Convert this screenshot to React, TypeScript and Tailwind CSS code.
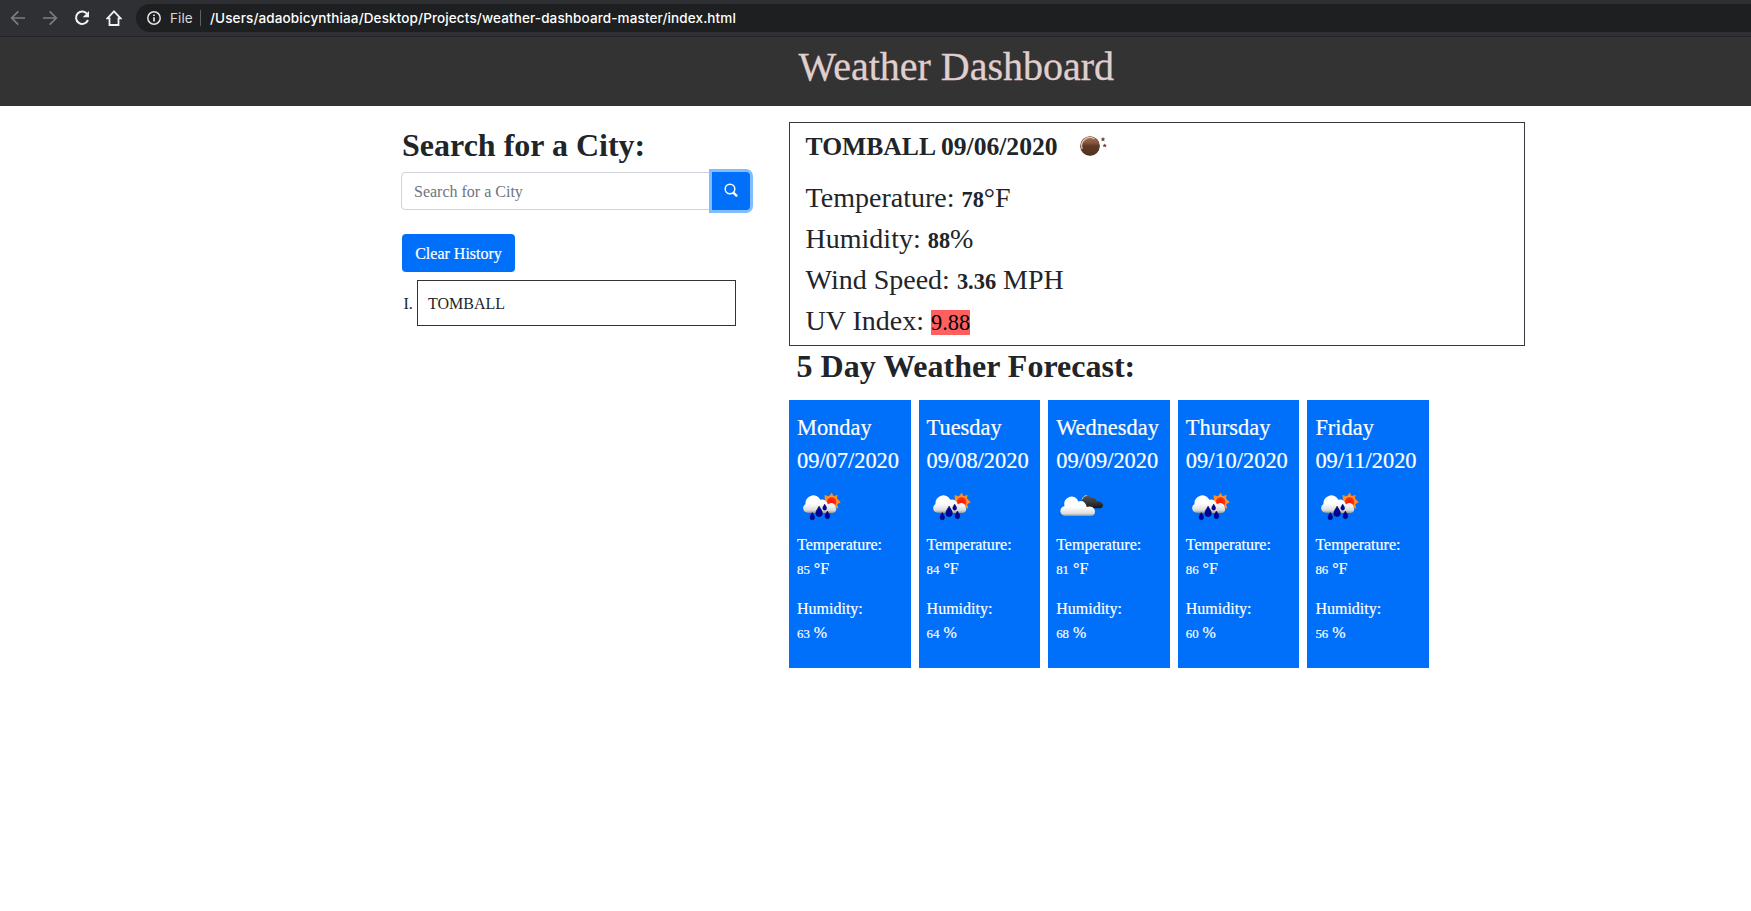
import React from "react";

type Sky = "rain" | "clouds";

interface Day {
  name: string;
  date: string;
  sky: Sky;
  temp: number;
  humidity: number;
}

const days: Day[] = [
  { name: "Monday", date: "09/07/2020", sky: "rain", temp: 85, humidity: 63 },
  { name: "Tuesday", date: "09/08/2020", sky: "rain", temp: 84, humidity: 64 },
  { name: "Wednesday", date: "09/09/2020", sky: "clouds", temp: 81, humidity: 68 },
  { name: "Thursday", date: "09/10/2020", sky: "rain", temp: 86, humidity: 60 },
  { name: "Friday", date: "09/11/2020", sky: "rain", temp: 86, humidity: 56 },
];

function Drop({ x, y, s }: { x: number; y: number; s: number }) {
  return (
    <path
      transform={`translate(${x} ${y}) scale(${s})`}
      d="M0 -5.2C1 -2.8 3.2 -1 3.2 1.8A3.2 3.3 0 0 1 -3.2 1.8C-3.2 -1 -1 -2.8 0 -5.2Z"
      fill="#03039c"
      stroke="#02025e"
      strokeWidth="0.7"
    />
  );
}

function RainIcon() {
  return (
    <svg width="50" height="50" viewBox="0 0 50 50" className="block">
      <defs>
        <linearGradient id="rainCloud" x1="0" y1="12" x2="0" y2="31" gradientUnits="userSpaceOnUse">
          <stop offset="0.5" stopColor="#ffffff" />
          <stop offset="0.85" stopColor="#dcdcdc" />
          <stop offset="1" stopColor="#9a9a9a" />
        </linearGradient>
        <radialGradient id="sun">
          <stop offset="0.3" stopColor="#ff1a0a" />
          <stop offset="0.75" stopColor="#fb3a16" />
          <stop offset="1" stopColor="#ffb259" />
        </radialGradient>
      </defs>
      <path
        d="M34.8 10.6L36.6 14.2L40.6 12.7L40 16.6L43.8 20.2L40.2 22.2L41.4 26.4L37 26L33 27L28 20L27.5 13L31.9 14.2Z"
        fill="#f98d1d"
      />
      <circle cx="34.6" cy="20" r="5.8" fill="url(#sun)" />
      <path
        d="M10.500 30.800A4.800 4.800 0 0 1 8.500 21.900A7.800 7.800 0 0 1 23.300 17.800Q28.500 16.500 31 22.600A4.200 4.200 0 0 1 38.500 25.500A3.500 3.500 0 0 1 35.500 31H28L21 31Z"
        fill="url(#rainCloud)"
      />
      <Drop x={15.3} y={34.2} s={0.72} />
      <Drop x={22.100} y={29.400} s={1} />
      <Drop x={27.700} y={25.100} s={0.6} />
      <Drop x={30.400} y={32.900} s={0.75} />
    </svg>
  );
}

function CloudsIcon() {
  return (
    <svg width="50" height="50" viewBox="-0.600 -0.300 50 50" className="block">
      <defs>
        <linearGradient id="frontCloud" x1="0" y1="15" x2="0" y2="34" gradientUnits="userSpaceOnUse">
          <stop offset="0.5" stopColor="#ffffff" />
          <stop offset="0.85" stopColor="#dedede" />
          <stop offset="1" stopColor="#858585" />
        </linearGradient>
        <linearGradient id="darkCloud" x1="0" y1="13" x2="0" y2="26" gradientUnits="userSpaceOnUse">
          <stop offset="0" stopColor="#5a5a5a" />
          <stop offset="0.5" stopColor="#3a3a3a" />
          <stop offset="1" stopColor="#161616" />
        </linearGradient>
      </defs>
      <path
        d="M27 26L25.500 17.500A5 5 0 0 1 34.600 15.900A4 4 0 0 1 40.200 19.200A3.200 3.200 0 0 1 44.500 20.200A3 3 0 0 1 44 26Z"
        fill="url(#darkCloud)"
      />
      <path d="M25.800 17A4.600 4.600 0 0 1 30.500 13.300" fill="none" stroke="#c4c4c4" strokeWidth="1" />
      <path
        d="M9.500 33.700A5 5 0 0 1 8 23.800A7.200 7.200 0 0 1 21.800 19.200Q28 17.200 30.200 24.600Q36.500 23.200 38.300 28.200Q38.800 33.700 34.500 33.700Z"
        fill="url(#frontCloud)"
      />
    </svg>
  );
}

function MoonIcon() {
  return (
    <svg width="30" height="24" viewBox="0 0 30 24" className="mt-[3px] ml-[21px] block">
      <defs>
        <linearGradient id="moon" x1="0" y1="0" x2="0" y2="1">
          <stop offset="0" stopColor="#a8745a" />
          <stop offset="0.35" stopColor="#82523a" />
          <stop offset="0.5" stopColor="#5f3a27" />
          <stop offset="1" stopColor="#54311f" />
        </linearGradient>
      </defs>
      <circle cx="11" cy="12" r="9.800" fill="#6b422d" />
      <circle cx="11" cy="12" r="9.500" fill="url(#moon)" />
      <path d="M3.200 15A8.400 8.400 0 0 1 15.500 4.800" fill="none" stroke="#e8c4b0" strokeWidth="1.300" />
      <path d="M24 2.800L24.700 4.400L26.400 4.500L25.100 5.600L25.500 7.300L24 6.400L22.500 7.300L22.900 5.600L21.600 4.500L23.300 4.400Z" fill="#6b3d2b" />
      <path d="M25.700 9.400L26.300 10.800L27.900 10.900L26.700 11.900L27.100 13.400L25.700 12.600L24.300 13.400L24.700 11.900L23.500 10.900L25.100 10.800Z" fill="#6b3d2b" />
    </svg>
  );
}

function BrowserBar() {
  return (
    <div className="flex h-[37px] items-start border-b border-[#232425] bg-[#2f3034] pt-1 font-['Inter',sans-serif]">
      <div className="flex h-7 w-[136px] shrink-0 items-center pl-[10px]">
        <svg width="16" height="16" viewBox="0 0 16 16" fill="none" stroke="#7d7e81" strokeWidth="1.700">
          <path d="M15 8H2M8.300 1.300L1.700 8L8.300 14.700" />
        </svg>
        <svg width="16" height="16" viewBox="0 0 16 16" fill="none" stroke="#7d7e81" strokeWidth="1.700" className="ml-4">
          <path d="M1 8H14M7.700 1.300L14.300 8L7.700 14.700" />
        </svg>
        <svg width="16" height="16" viewBox="0 0 16 16" fill="none" className="ml-4">
          <path d="M13.400 4.200A6.200 6.200 0 1 0 14 10" stroke="#f1f1f1" strokeWidth="2" />
          <path d="M15 0.900V7.200H8.700Z" fill="#f1f1f1" />
        </svg>
        <svg width="16" height="16" viewBox="0 0 16 16" fill="none" stroke="#f1f1f1" strokeWidth="1.800" className="ml-4">
          <path d="M8 1.400L1.300 8.400H3.500V15H12.500V8.400H14.700Z" />
        </svg>
      </div>
      <div className="flex h-7 flex-1 items-center rounded-l-full bg-[#1e1f21] pl-[11px]">
        <svg width="14" height="14" viewBox="0 0 14 14" fill="none" stroke="#e4e4e5" strokeWidth="1.500">
          <circle cx="7" cy="7" r="6.200" />
          <path d="M7 6.200V10.400M7 3.500V5" strokeWidth="1.700" />
        </svg>
        <span className="ml-[9px] w-[30px] pt-px text-[13.500px] tracking-[0.120px] text-[#d8d9db]">File</span>
        <span className="h-4 w-px bg-[#5f6063]" />
        <span className="ml-[9px] pt-px text-[13.500px] font-medium tracking-[0.120px] whitespace-nowrap text-white">
          /Users/adaobicynthiaa/Desktop/Projects/weather-dashboard-master/index.html
        </span>
      </div>
    </div>
  );
}

function SearchColumn() {
  return (
    <section className="w-[388px] shrink-0 pt-5">
      <h2 className="pt-px pl-px text-[32px] leading-[37px] font-bold">Search for a City:</h2>
      <div className="mt-2 flex w-[349px]">
        <input
          className="h-[38px] w-[311px] rounded-l border border-[#ced4da] bg-white px-3 pt-0.5 text-base text-[#495057] outline-none placeholder:text-[#6c757d]"
          placeholder="Search for a City"
        />
        <button
          aria-label="Search"
          className="flex h-[38px] w-[38px] items-center justify-center rounded-r bg-[#0070fb] shadow-[0_0_0_3px_#80bdff]"
        >
          <svg width="14" height="14" viewBox="0 0 14 14" fill="none" stroke="#ffffff" className="-mt-0.5">
            <circle cx="6" cy="6" r="4.800" strokeWidth="1.500" />
            <path d="M9.600 9.800L12.400 12.600" strokeWidth="2.400" strokeLinecap="round" />
          </svg>
        </button>
      </div>
      <button className="mt-6 ml-px h-[38px] w-[113px] rounded bg-[#0070fb] pt-0.5 text-base text-white [-webkit-text-stroke:0.2px]">
        Clear History
      </button>
      <div className="mt-2 flex h-[46px] items-center">
        <span className="w-4 pt-0.5 pl-[2.500px] text-base">I.</span>
        <div className="flex h-[46px] w-[319px] items-center border border-[#333333] pt-0.5 pl-[10px] text-base">TOMBALL</div>
      </div>
    </section>
  );
}

function Reading({ label, children }: { label: string; children: React.ReactNode }) {
  return (
    <p className="h-[41px] text-[28px] leading-[41px]">
      {label} {children}
    </p>
  );
}

function CurrentWeather() {
  return (
    <div className="h-[224px] border border-[#343a40] pt-2 pl-[15.600px]">
      <div className="flex h-[46px] items-start">
        <h3 className="text-[25.6px] leading-[31px] font-bold">TOMBALL 09/06/2020</h3>
        <MoonIcon />
      </div>
      <Reading label="Temperature:">
        <b className="text-[22.4px] leading-none">78</b>°F
      </Reading>
      <Reading label="Humidity:">
        <b className="text-[22.4px] leading-none">88</b>%
      </Reading>
      <Reading label="Wind Speed:">
        <b className="text-[22.4px] leading-none">3.36</b> MPH
      </Reading>
      <Reading label="UV Index:">
        <span className="bg-[#ff5f5f] text-[22.4px] leading-none text-black">9.88</span>
      </Reading>
    </div>
  );
}

function DayCard({ day }: { day: Day }) {
  return (
    <div className="h-[268px] w-[121.600px] bg-[#0070fb] px-2 pt-[11px] text-white [-webkit-text-stroke:0.2px]">
      <h5 className="text-[22.4px] leading-[33px] whitespace-nowrap">
        {day.name}
        <br />
        {day.date}
      </h5>
      <div className="h-14 pt-[5px]">{day.sky === "rain" ? <RainIcon /> : <CloudsIcon />}</div>
      <p className="text-base leading-6">
        Temperature:
        <br />
        <span className="text-[12.8px] leading-none">{day.temp}</span> °F
      </p>
      <p className="mt-4 text-base leading-6">
        Humidity:
        <br />
        <span className="text-[12.8px] leading-none">{day.humidity}</span> %
      </p>
    </div>
  );
}

export default function App() {
  return (
    <div className="min-h-screen bg-white font-['Liberation_Serif',serif] text-[#212529]">
      <BrowserBar />
      <header className="h-[69px] bg-[#333333] pt-[6px] pl-[798.600px]">
        <h1 className="text-[40px] leading-[48px] text-[#e0cfcf] [-webkit-text-stroke:0.3px]">Weather Dashboard</h1>
      </header>
      <main className="flex pl-[401px]">
        <SearchColumn />
        <section className="w-[736px] pt-4">
          <CurrentWeather />
          <h2 className="h-[54px] pt-px pl-[7.600px] text-[32px] leading-[38px] font-bold">5 Day Weather Forecast:</h2>
          <div className="flex gap-2">
            {days.map((day) => (
              <DayCard key={day.date} day={day} />
            ))}
          </div>
        </section>
      </main>
    </div>
  );
}
